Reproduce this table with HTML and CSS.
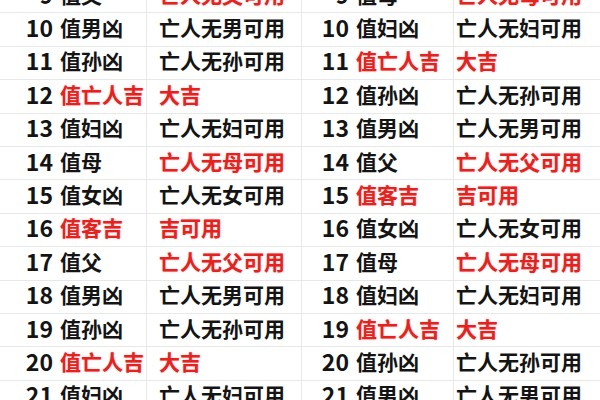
FILE: index.html
```html
<!DOCTYPE html>
<html lang="zh">
<head>
<meta charset="utf-8">
<link rel="stylesheet" href="styles.css">
</head>
<body>
<div class="page">
  <div class="half left">
    <div class="row"><div class="c1"><span class="num">9</span><span class="nm">值父</span></div><div class="c2 red">亡人无父可用</div></div>
    <div class="row"><div class="c1"><span class="num">10</span><span class="nm">值男凶</span></div><div class="c2">亡人无男可用</div></div>
    <div class="row"><div class="c1"><span class="num">11</span><span class="nm">值孙凶</span></div><div class="c2">亡人无孙可用</div></div>
    <div class="row"><div class="c1"><span class="num">12</span><span class="nm red">值亡人吉</span></div><div class="c2 red">大吉</div></div>
    <div class="row"><div class="c1"><span class="num">13</span><span class="nm">值妇凶</span></div><div class="c2">亡人无妇可用</div></div>
    <div class="row"><div class="c1"><span class="num">14</span><span class="nm">值母</span></div><div class="c2 red">亡人无母可用</div></div>
    <div class="row"><div class="c1"><span class="num">15</span><span class="nm">值女凶</span></div><div class="c2">亡人无女可用</div></div>
    <div class="row"><div class="c1"><span class="num">16</span><span class="nm red">值客吉</span></div><div class="c2 red">吉可用</div></div>
    <div class="row"><div class="c1"><span class="num">17</span><span class="nm">值父</span></div><div class="c2 red">亡人无父可用</div></div>
    <div class="row"><div class="c1"><span class="num">18</span><span class="nm">值男凶</span></div><div class="c2">亡人无男可用</div></div>
    <div class="row"><div class="c1"><span class="num">19</span><span class="nm">值孙凶</span></div><div class="c2">亡人无孙可用</div></div>
    <div class="row"><div class="c1"><span class="num">20</span><span class="nm red">值亡人吉</span></div><div class="c2 red">大吉</div></div>
    <div class="row"><div class="c1"><span class="num">21</span><span class="nm">值妇凶</span></div><div class="c2">亡人无妇可用</div></div>
  </div>
  <div class="half right">
    <div class="row"><div class="c1"><span class="num">9</span><span class="nm">值母</span></div><div class="c2 red">亡人无母可用</div></div>
    <div class="row"><div class="c1"><span class="num">10</span><span class="nm">值妇凶</span></div><div class="c2">亡人无妇可用</div></div>
    <div class="row"><div class="c1"><span class="num">11</span><span class="nm red">值亡人吉</span></div><div class="c2 red">大吉</div></div>
    <div class="row"><div class="c1"><span class="num">12</span><span class="nm">值孙凶</span></div><div class="c2">亡人无孙可用</div></div>
    <div class="row"><div class="c1"><span class="num">13</span><span class="nm">值男凶</span></div><div class="c2">亡人无男可用</div></div>
    <div class="row"><div class="c1"><span class="num">14</span><span class="nm">值父</span></div><div class="c2 red">亡人无父可用</div></div>
    <div class="row"><div class="c1"><span class="num">15</span><span class="nm red">值客吉</span></div><div class="c2 red">吉可用</div></div>
    <div class="row"><div class="c1"><span class="num">16</span><span class="nm">值女凶</span></div><div class="c2">亡人无女可用</div></div>
    <div class="row"><div class="c1"><span class="num">17</span><span class="nm">值母</span></div><div class="c2 red">亡人无母可用</div></div>
    <div class="row"><div class="c1"><span class="num">18</span><span class="nm">值妇凶</span></div><div class="c2">亡人无妇可用</div></div>
    <div class="row"><div class="c1"><span class="num">19</span><span class="nm red">值亡人吉</span></div><div class="c2 red">大吉</div></div>
    <div class="row"><div class="c1"><span class="num">20</span><span class="nm">值孙凶</span></div><div class="c2">亡人无孙可用</div></div>
    <div class="row"><div class="c1"><span class="num">21</span><span class="nm">值男凶</span></div><div class="c2">亡人无男可用</div></div>
  </div>
</div>
</body>
</html>
```
FILE: styles.css
```css
html, body {
  margin: 0;
  padding: 0;
  background: #ffffff;
  overflow: hidden;
}
body {
  font-family: "Noto Sans CJK SC", "Noto Sans", sans-serif;
  font-weight: 700;
  font-size: 21px;
  color: #141414;
  width: 600px;
  height: 400px;
}
.page {
  display: flex;
  margin-top: -20px;
}
.half {
  display: flex;
  flex-direction: column;
}
.left { width: 302px; }
.right { width: 298px; }
.row {
  display: grid;
  height: 33.4px;
  box-sizing: border-box;
  border-bottom: 1px solid #e8e8e8;
}
.left .row { grid-template-columns: 147px 155px; }
.right .row { grid-template-columns: 152px 146px; }
.c1, .c2 {
  display: flex;
  align-items: center;
  line-height: 1;
  white-space: nowrap;
  padding-bottom: 4px;
}
.c1 {
  gap: 7px;
  border-right: 1px solid #e8e8e8;
}
.left .c2 {
  padding-left: 12px;
  border-right: 1px solid #e8e8e8;
}
.right .c2 { padding-left: 2px; }
.num {
  text-align: right;
  display: inline-block;
  font-size: 23px;
}
.left .num { width: 53px; }
.right .num { width: 47px; }
.red {
  color: #e2231f;
  text-shadow: 0 0 2px rgba(240, 120, 120, 0.6);
}
```
